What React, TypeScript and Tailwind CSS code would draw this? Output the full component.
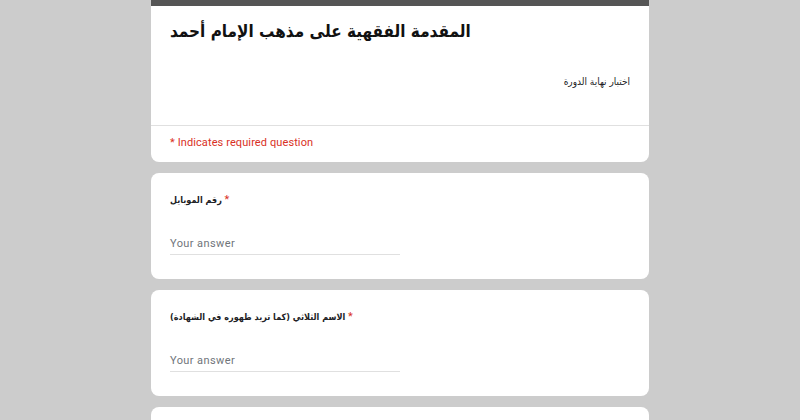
const AR = "font-['DejaVu_Sans_Condensed','DejaVu_Sans',sans-serif]";

function Question({ label }: { label: string }) {
  return (
    <div className="bg-white rounded-lg px-[19px] pt-[19px] pb-[24px] shrink-0">
      <div className={`${AR} text-[9px] font-bold text-[#202124] h-[16px] leading-[16px]`}>
        <span>{label}</span>
        <span className="font-['Roboto',sans-serif] text-[#d93025] text-[11px] font-normal"> *</span>
      </div>
      <div className="mt-[27px] pb-[1px] w-[230px] border-b border-[#e0e0e0] font-['Roboto',sans-serif] text-[11px] leading-[18px] tracking-[0.4px] text-[#70757a]">
        Your answer
      </div>
    </div>
  );
}

export default function App() {
  return (
    <div className="h-[420px] overflow-hidden bg-[#cccccc] flex justify-center">
      <div className="w-[498px] flex flex-col gap-[11px]">
        <div className="bg-white rounded-b-lg overflow-hidden shrink-0">
          <div className="h-[6px] bg-[#555555]" />
          <div className="px-[19px] pt-[10px] pb-[37px]">
            <h1 className={`${AR} text-[17px] font-bold text-[#111111] leading-[30px]`}>
              المقدمة الفقهية على مذهب الإمام أحمد
            </h1>
            <p dir="rtl" className={`${AR} mt-[30px] text-[10px] text-[#202124] leading-[12px]`}>
              اختبار نهاية الدورة
            </p>
          </div>
          <div className="border-t border-[#e0e0e0] px-[19px] pt-[9px] pb-[11px] font-['Roboto',sans-serif] text-[11px] leading-[16px] text-[#d93025] tracking-[0.1px]">
            * Indicates required question
          </div>
        </div>
        <Question label="رقم الموبايل" />
        <Question label="الاسم الثلاثي (كما تريد ظهوره في الشهادة)" />
        <div className="bg-white rounded-lg h-[60px] shrink-0" />
      </div>
    </div>
  );
}
